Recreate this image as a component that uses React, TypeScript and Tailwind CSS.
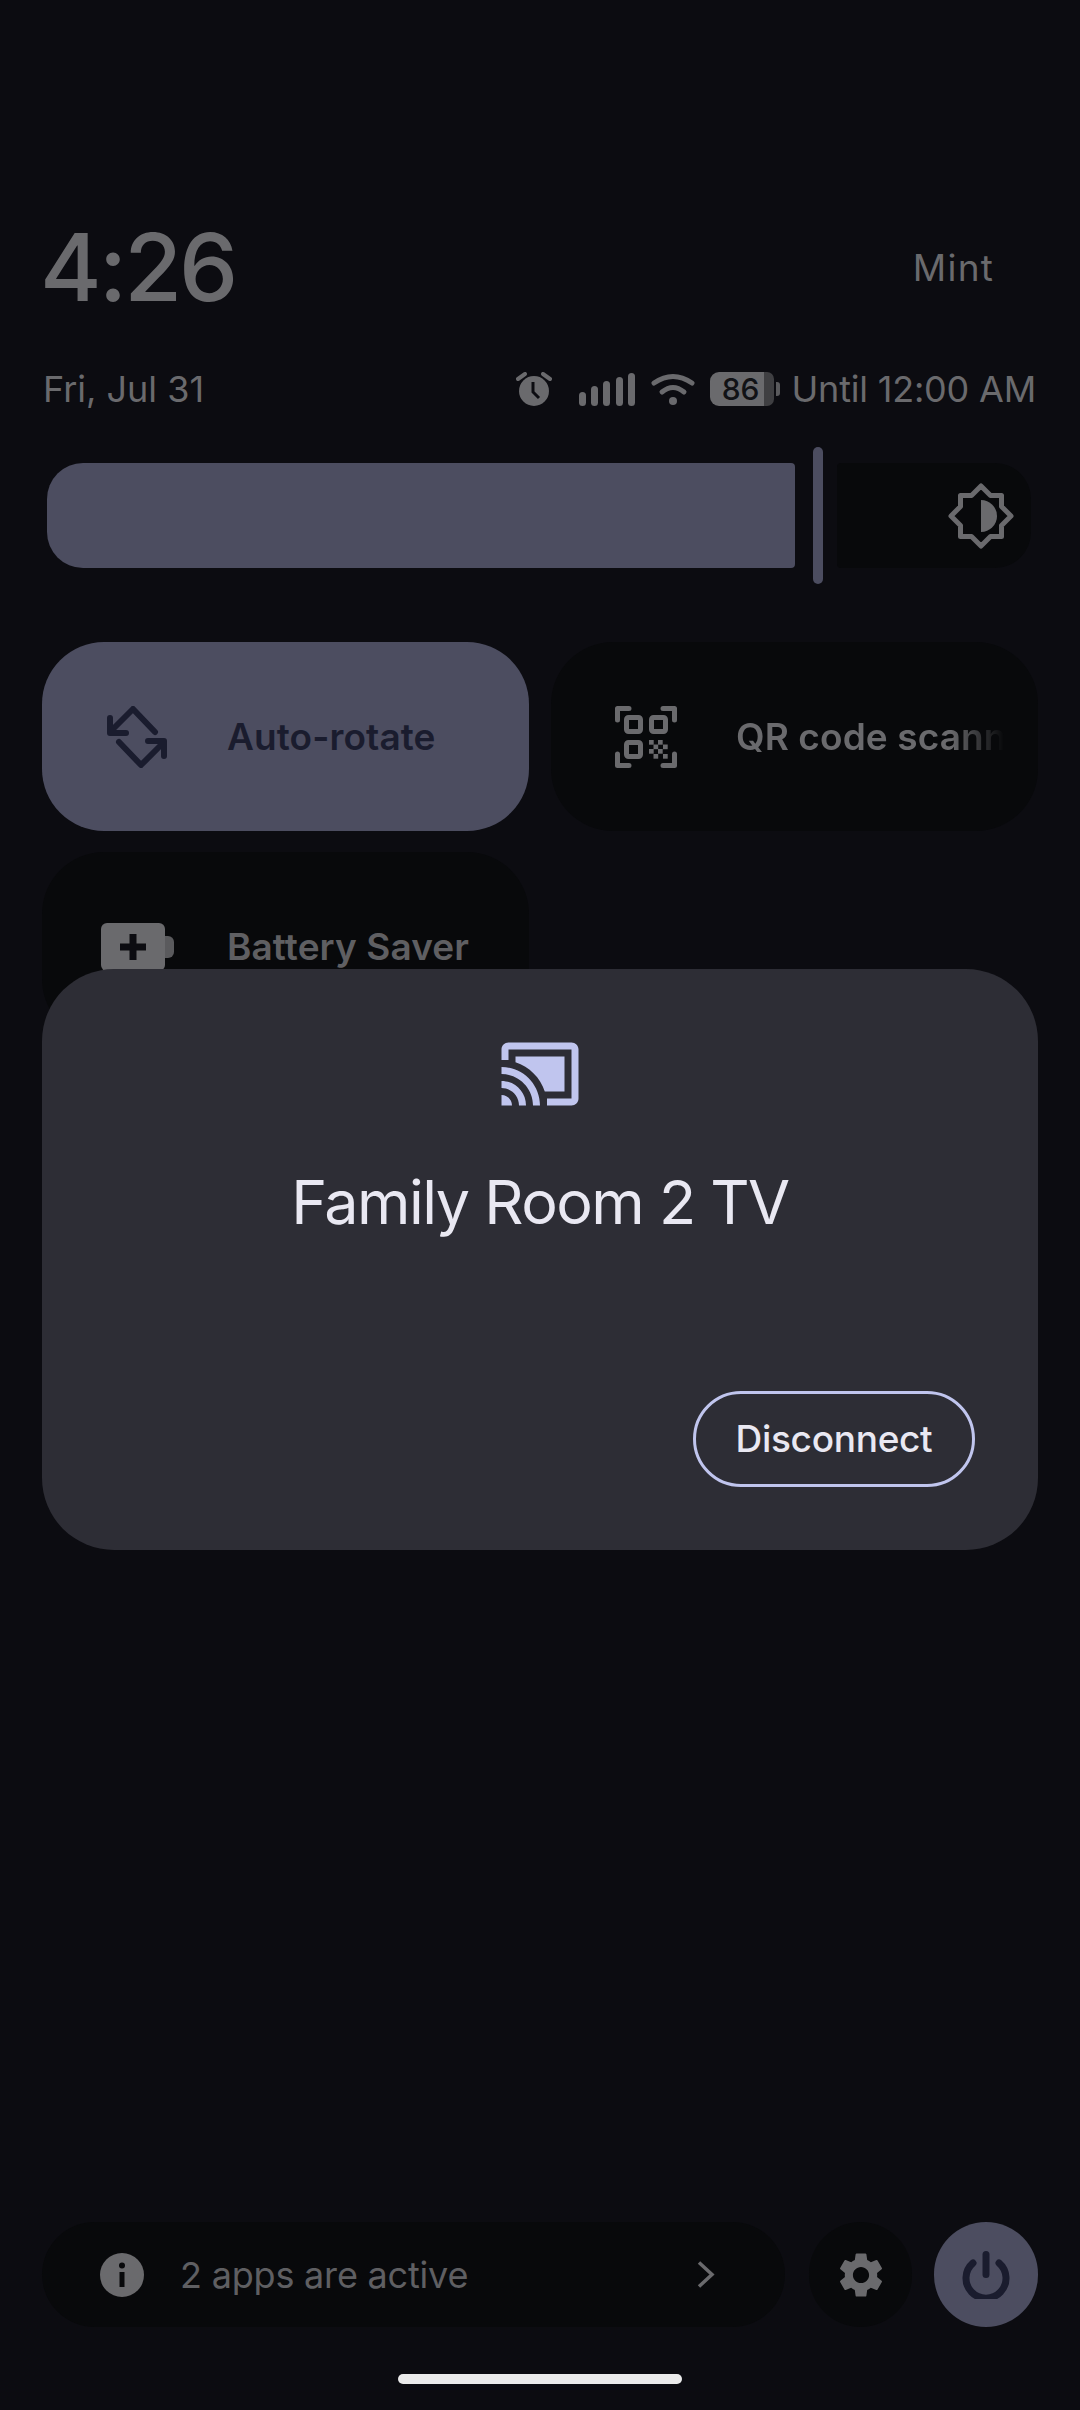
import React from 'react';

const GREY = '#6a6a6d';

const Alarm = () => (
  <svg width="36" height="34" viewBox="0 0 36 34" className="shrink-0">
    <circle cx="18" cy="19" r="15" fill={GREY} />
    <path d="M17 10v10l6 6" fill="none" stroke="#0c0c11" strokeWidth="3" />
    <path d="M2 7l7-5M34 7l-7-5" fill="none" stroke={GREY} strokeWidth="4" strokeLinecap="round" />
  </svg>
);

const Signal = () => (
  <svg width="56" height="33" viewBox="0 0 56 33" className="shrink-0" fill={GREY}>
    <rect x="0" y="19" width="7" height="14" rx="3.5" />
    <rect x="12" y="13" width="7" height="20" rx="3.5" />
    <rect x="24" y="8" width="7" height="25" rx="3.5" />
    <rect x="37" y="4" width="7" height="29" rx="3.5" />
    <rect x="49" y="0" width="7" height="33" rx="3.5" />
  </svg>
);

const Wifi = () => (
  <svg width="44" height="32" viewBox="0 0 44 32" className="shrink-0">
    <path d="M3 10Q22 -3 41 10" fill="none" stroke={GREY} strokeWidth="5" strokeLinecap="round" />
    <path d="M11 19Q22 10 33 19" fill="none" stroke={GREY} strokeWidth="5" strokeLinecap="round" />
    <circle cx="22" cy="28" r="4" fill={GREY} />
  </svg>
);

const Battery = () => (
  <div className="flex items-center shrink-0 h-[34px]">
    <div className="relative flex h-full">
      <div className="w-[54px] h-full bg-[#6a6a6d] rounded-l-[9px]" />
      <div className="w-[10px] h-full bg-[#3f3f42] rounded-r-[7px]" />
      <span className="absolute left-[11px] top-0 w-[40px] text-center text-[30px] leading-[34px] font-medium text-[#111216]">86</span>
    </div>
    <div className="w-[4px] h-[14px] ml-[2px] bg-[#5a5a5d] rounded-r-[3px]" />
  </div>
);

const Brightness = () => (
  <svg width="66" height="66" viewBox="0 0 66 66">
    <path d="M33 3l9.5 9.5h11v11L63 33l-9.5 9.5v11h-11L33 63l-9.5-9.5h-11v-11L3 33l9.5-9.5v-11h11z" fill="none" stroke={GREY} strokeWidth="5" strokeLinejoin="round" />
    <path d="M33 17a16 16 0 0 1 0 32z" fill={GREY} />
  </svg>
);

const Rotate = () => (
  <svg width="60" height="62" viewBox="0 0 60 62" fill="none" stroke="#1a1c2e" strokeWidth="6" strokeLinecap="round" strokeLinejoin="round">
    <path d="M48 26L26 3L4 25" />
    <path d="M3 12v15h16" />
    <path d="M12 36L34 59L56 37" />
    <path d="M57 50V35H41" />
  </svg>
);

const checker = [
  [0, 0], [9, 0], [4.5, 4.5], [14, 4.5], [0, 9], [9, 9], [4.5, 14], [14, 14],
];

const Qr = () => (
  <svg width="62" height="62" viewBox="0 0 62 62" fill="none" stroke={GREY} strokeWidth="5">
    <path d="M14 2.5H2.5V14M48 2.5H59.5V14M2.5 48V59.5H14M59.5 48V59.5H48" strokeLinejoin="round" strokeLinecap="round" />
    <rect x="11.5" y="11.5" width="14" height="14" rx="2" />
    <rect x="36.5" y="11.5" width="14" height="14" rx="2" />
    <rect x="11.5" y="36.5" width="14" height="14" rx="2" />
    {checker.map(([x, y]) => (
      <rect key={`${x}-${y}`} x={34 + x} y={34 + y} width="4.7" height="4.7" fill={GREY} stroke="none" />
    ))}
  </svg>
);

const BatteryPlus = () => (
  <svg width="74" height="48" viewBox="0 0 74 48">
    <path d="M7 0h52a6 6 0 0 1 6 6v36a6 6 0 0 1-6 6H7a6 6 0 0 1-6-6V6a6 6 0 0 1 6-6z" fill={GREY} />
    <path d="M65 13h3a6 6 0 0 1 6 6v10a6 6 0 0 1-6 6h-3z" fill="#5a5a5d" />
    <path d="M33 11v26M20 24h26" stroke="#0c0c11" strokeWidth="7" />
  </svg>
);

const Cast = () => (
  <svg width="84" height="84" viewBox="0 0 24 24" fill="#c0c5ee">
    <path d="M1 18v3h3c0-1.66-1.34-3-3-3zm0-4v2c2.76 0 5 2.24 5 5h2c0-3.87-3.13-7-7-7zm18-7H5v1.63c3.96 1.28 7.09 4.41 8.37 8.37H19V7zM1 10v2c4.97 0 9 4.03 9 9h2c0-6.08-4.93-11-11-11zm20-7H3c-1.1 0-2 .9-2 2v3h2V5h18v14h-7v2h7c1.1 0 2-.9 2-2V5c0-1.1-.9-2-2-2z" />
  </svg>
);

const Info = () => (
  <svg width="44" height="44" viewBox="0 0 44 44" className="shrink-0">
    <circle cx="22" cy="22" r="22" fill={GREY} />
    <rect x="19.5" y="19" width="5" height="15" fill="#08090b" />
    <circle cx="22" cy="12.5" r="3" fill="#08090b" />
  </svg>
);

const Gear = () => (
  <svg width="54" height="54" viewBox="0 0 24 24" fill={GREY}>
    <path d="M19.14 12.94c.04-.3.06-.61.06-.94 0-.32-.02-.64-.07-.94l2.03-1.58c.18-.14.23-.41.12-.61l-1.92-3.32c-.12-.22-.37-.29-.59-.22l-2.39.96c-.5-.38-1.03-.7-1.62-.94l-.36-2.54c-.04-.24-.24-.41-.48-.41h-3.84c-.24 0-.43.17-.47.41l-.36 2.54c-.59.24-1.13.57-1.62.94l-2.39-.96c-.22-.08-.47 0-.59.22L2.74 8.87c-.12.21-.08.47.12.61l2.03 1.58c-.05.3-.09.63-.09.94s.02.64.07.94l-2.03 1.58c-.18.14-.23.41-.12.61l1.92 3.32c.12.22.37.29.59.22l2.39-.96c.5.38 1.03.7 1.62.94l.36 2.54c.05.24.24.41.48.41h3.84c.24 0 .44-.17.47-.41l.36-2.54c.59-.24 1.13-.56 1.62-.94l2.39.96c.22.08.47 0 .59-.22l1.92-3.32c.12-.22.07-.47-.12-.61l-2.01-1.58zM12 15.6c-1.98 0-3.6-1.62-3.6-3.6s1.62-3.6 3.6-3.6 3.6 1.62 3.6 3.6-1.62 3.6-3.6 3.6z" />
  </svg>
);

const Power = () => (
  <svg width="48" height="48" viewBox="0 0 48 48" fill="none" stroke="#1a1c2e" strokeWidth="7" strokeLinecap="round">
    <path d="M24 3.5v20" />
    <path d="M11 12a20 20 0 1 0 26 0" />
  </svg>
);

const Chevron = () => (
  <svg width="18" height="27" viewBox="0 0 18 27" fill="none" stroke={GREY} strokeWidth="3.5">
    <path d="M2 1.5L15 13.5L2 25.5" />
  </svg>
);

const Tile = ({ icon, label, active, fade, dim }: any) => (
  <div className={`flex items-center h-[189px] w-[487px] rounded-[62px] ${active ? 'bg-[#4c4d60]' : 'bg-[#08090b]'}`}>
    <div className="w-[185px] pl-[5px] shrink-0 flex justify-center">{icon}</div>
    <span
      className={`text-[37px] font-semibold tracking-[0.1px] whitespace-nowrap overflow-hidden w-[268px] ${active ? 'text-[#1a1c2e]' : dim ? 'text-[#5f5f62]' : 'text-[#6a6a6d]'} ${fade ? '[mask-image:linear-gradient(to_right,black_80%,transparent_100%)]' : ''}`}
    >
      {label}
    </span>
  </div>
);

export default function App() {
  return (
    <div className="relative flex flex-col h-[2410px] w-[1080px] overflow-hidden bg-[#0c0c11] pt-[217px] pb-[26px] font-['Inter','Liberation_Sans',sans-serif] text-[#6a6a6d]">
      {/* clock row */}
      <div className="flex items-center justify-between h-[100px] pl-[40px] pr-[86px]">
        <span className="text-[94px] leading-none font-medium tracking-[-3px]">4:26</span>
        <span className="text-[37px] leading-none tracking-[1.2px]">Mint</span>
      </div>

      {/* status row */}
      <div className="flex items-center h-[44px] mt-[50px] pl-[43px] pr-[44px]">
        <span className="text-[36px] leading-none">Fri, Jul 31</span>
        <div className="ml-auto flex items-center">
          <Alarm />
          <div className="ml-[27px]"><Signal /></div>
          <div className="ml-[16px]"><Wifi /></div>
          <div className="ml-[15px]"><Battery /></div>
          <span className="ml-[12px] text-[36px] leading-none tracking-[-0.2px]">Until 12:00 AM</span>
        </div>
      </div>

      {/* brightness slider */}
      <div className="flex items-center h-[137px] mt-[36px] pl-[47px]">
        <div className="w-[748px] h-[105px] bg-[#4c4d60] rounded-l-[36px] rounded-r-[4px]" />
        <div className="w-[10px] h-[137px] ml-[18px] bg-[#4c4d60] rounded-full" />
        <div className="flex items-center justify-end w-[194px] h-[105px] ml-[14px] pr-[17px] bg-[#08090b] rounded-r-[36px] rounded-l-[4px]">
          <Brightness />
        </div>
      </div>

      {/* tiles */}
      <div className="grid grid-cols-[487px_487px] gap-x-[22px] gap-y-[21px] mt-[58px] pl-[42px]">
        <Tile icon={<Rotate />} label="Auto-rotate" active />
        <Tile icon={<Qr />} label="QR code scanner" fade />
        <Tile icon={<BatteryPlus />} label="Battery Saver" dim />
      </div>

      {/* footer */}
      <div className="flex items-center gap-[24px] mt-auto pl-[42px]">
        <div className="flex items-center w-[743px] h-[105px] pl-[58px] pr-[70px] bg-[#08090b] rounded-full">
          <Info />
          <span className="ml-[36px] text-[36px] leading-none tracking-[-0.2px] text-[#5f5f62]">2 apps are active</span>
          <div className="ml-auto"><Chevron /></div>
        </div>
        <div className="flex items-center justify-center w-[103px] h-[105px] bg-[#08090b] rounded-full"><Gear /></div>
        <div className="flex items-center justify-center w-[104px] h-[105px] -ml-[2px] bg-[#4c4d60] rounded-full"><Power /></div>
      </div>

      {/* home bar */}
      <div className="self-center w-[284px] h-[10px] mt-[47px] bg-[#ebebeb] rounded-full" />

      {/* cast dialog */}
      <div className="absolute left-[42px] top-[969px] flex flex-col items-center w-[996px] h-[581px] p-[63px] bg-[#2d2d35] rounded-[72px]">
        <Cast />
        <h2 className="mt-[46px] text-[61px] leading-[80px] font-normal tracking-[-1.5px] text-[#e9e8f2] whitespace-nowrap">Family Room 2 TV</h2>
        <div className="mt-auto self-end flex items-center justify-center w-[282px] h-[96px] border-[3px] border-[#c0c5ee] rounded-full">
          <span className="text-[37px] font-medium tracking-[-0.3px] text-[#e9e8f2]">Disconnect</span>
        </div>
      </div>
    </div>
  );
}
